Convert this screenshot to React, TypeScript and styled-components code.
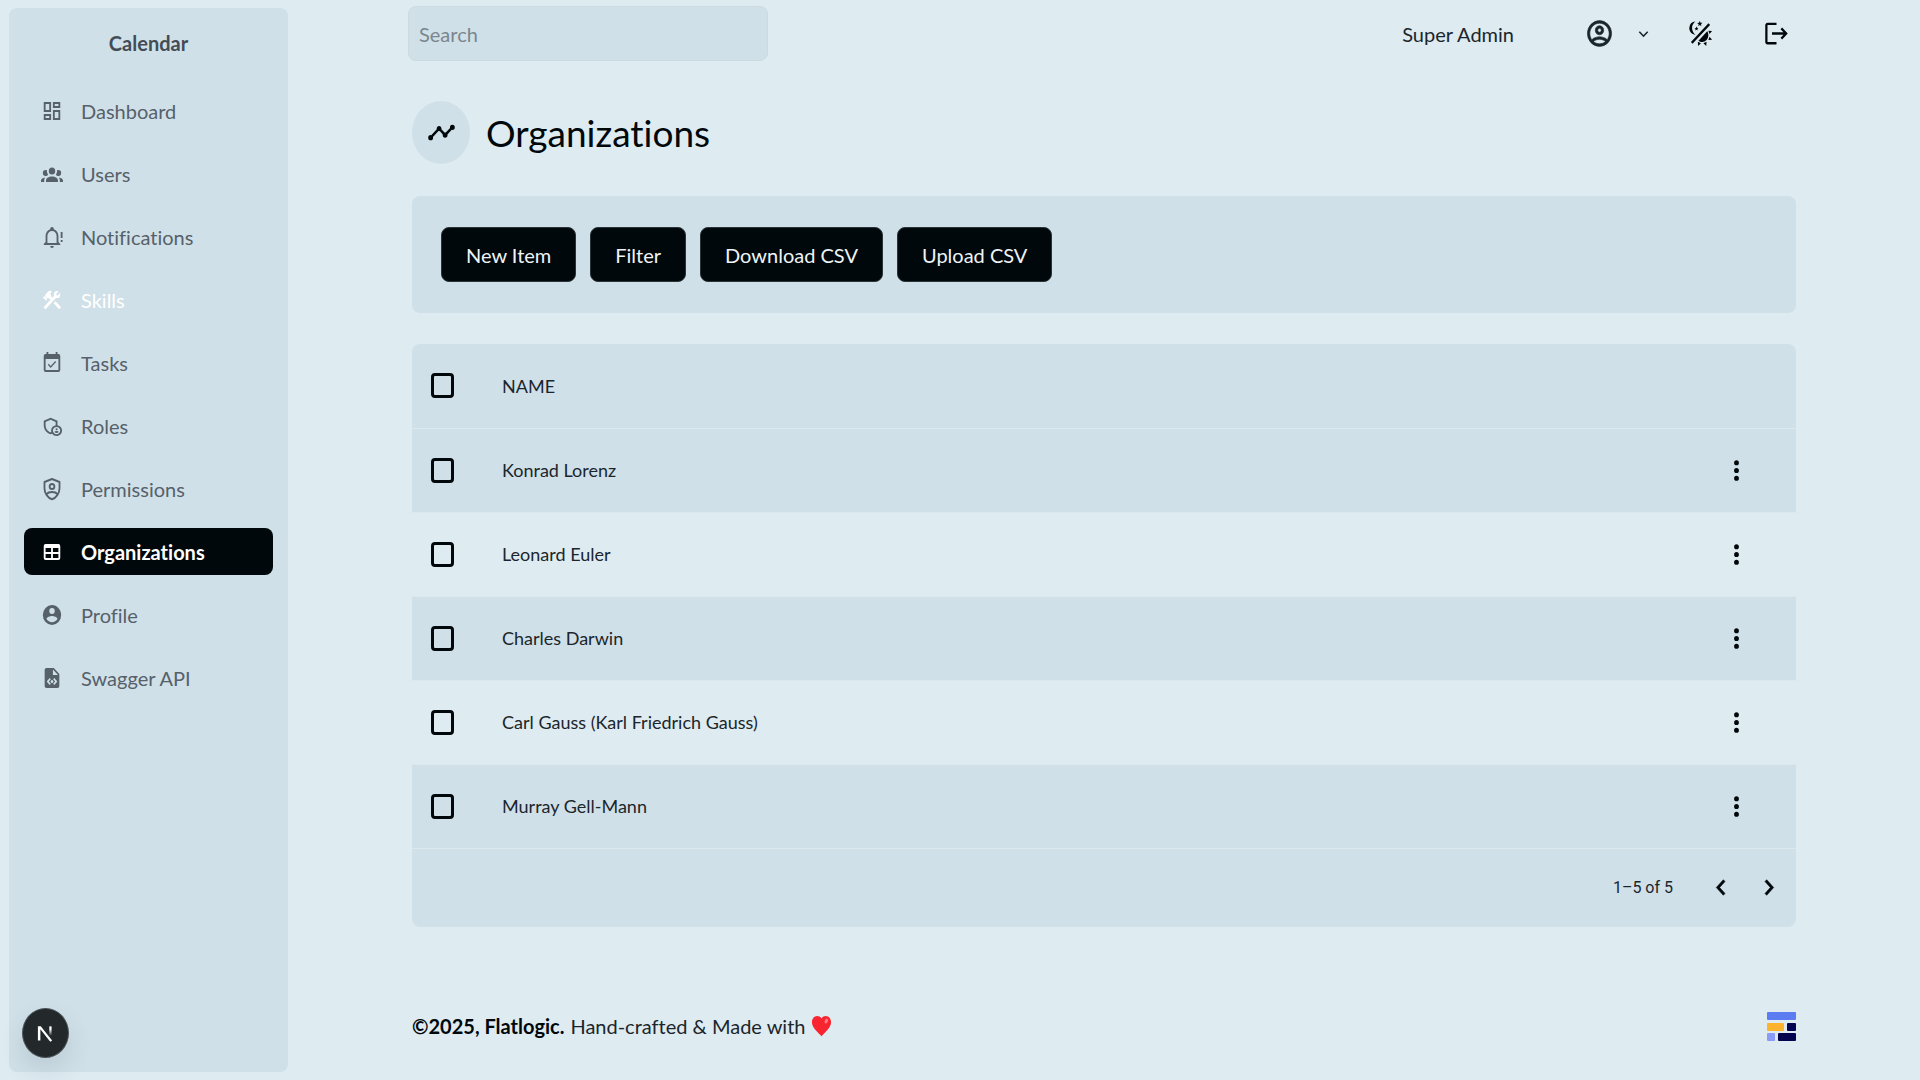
import React from "react";
import styled, { createGlobalStyle, css } from "styled-components";
import { MdOutlineAdminPanelSettings } from "react-icons/md";

const color = {
  page: "#deebf1",
  panel: "#d0e0e8",
  ink: "#01080b",
  text: "#1b262c",
  muted: "#56616a",
  border: "#dbe8ee",
};

const GlobalStyle = createGlobalStyle`
  *, *::before, *::after { box-sizing: border-box; }
  body {
    margin: 0;
    background: ${color.page};
    color: ${color.text};
    font: 400 20px/24px Lato, "Open Sans", sans-serif;
    font-variant-ligatures: none;
  }
  button, input { font: inherit; color: inherit; }
  h1, p { margin: 0; }
`;

const path = {
  dashboard:
    "M19,5V7H15V5H19M9,5V11H5V5H9M19,13V19H15V13H19M9,17V19H5V17H9M21,3H13V9H21V3M11,3H3V13H11V3M21,11H13V21H21V11M11,15H3V21H11V15Z",
  group:
    "M12,5.5A3.5,3.5 0 0,1 15.5,9A3.5,3.5 0 0,1 12,12.5A3.5,3.5 0 0,1 8.5,9A3.5,3.5 0 0,1 12,5.5M5,8C5.56,8 6.08,8.15 6.53,8.42C6.38,9.85 6.8,11.27 7.66,12.38C7.16,13.34 6.16,14 5,14A3,3 0 0,1 2,11A3,3 0 0,1 5,8M19,8A3,3 0 0,1 22,11A3,3 0 0,1 19,14C17.84,14 16.84,13.34 16.34,12.38C17.2,11.27 17.62,9.85 17.47,8.42C17.92,8.15 18.44,8 19,8M5.5,18.25C5.5,16.18 8.41,14.5 12,14.5C15.59,14.5 18.5,16.18 18.5,18.25V20H5.5V18.25M0,20V18.5C0,17.11 1.89,15.94 4.45,15.6C3.86,16.28 3.5,17.22 3.5,18.25V20H0M24,20H20.5V18.25C20.5,17.22 20.14,16.28 19.55,15.6C22.11,15.94 24,17.11 24,18.5V20Z",
  bell:
    "M10,21H14A2,2 0 0,1 12,23A2,2 0 0,1 10,21M21,19V20H3V19L5,17V11C5,7.9 7.03,5.17 10,4.29C10,4.19 10,4.1 10,4A2,2 0 0,1 12,2A2,2 0 0,1 14,4C14,4.1 14,4.19 14,4.29C16.97,5.17 19,7.9 19,11V17L21,19M17,11A5,5 0 0,0 12,6A5,5 0 0,0 7,11V18H17V11M21.5,7V13H23.5V7H21.5M21.5,15V17H23.5V15H21.5Z",
  tools:
    "M13.78 15.3L19.78 21.3L21.89 19.14L15.89 13.14L13.78 15.3M17.5 10.1C17.11 10.1 16.69 10.05 16.36 9.91L4.97 21.25L2.86 19.14L10.27 11.74L8.5 9.96L7.78 10.66L6.33 9.25V12.11L5.63 12.81L2.11 9.25L2.81 8.55H5.62L4.22 7.14L7.78 3.58C8.95 2.41 10.83 2.41 12 3.58L9.89 5.74L11.3 7.14L10.59 7.85L12.38 9.63L14.2 7.75C14.06 7.42 14 7 14 6.63C14 4.66 15.56 3.11 17.5 3.11C18.09 3.11 18.61 3.25 19.08 3.53L16.41 6.2L17.91 7.7L20.58 5.03C20.86 5.5 21 6 21 6.63C21 8.55 19.45 10.1 17.5 10.1Z",
  calendar:
    "M19,19H5V8H19M19,3H18V1H16V3H8V1H6V3H5C3.89,3 3,3.9 3,5V19A2,2 0 0,0 5,21H19A2,2 0 0,0 21,19V5A2,2 0 0,0 19,3M16.53,11.06L15.47,10L10.59,14.88L8.47,12.76L7.41,13.82L10.59,17L16.53,11.06Z",
  table:
    "M5,4H19A2,2 0 0,1 21,6V18A2,2 0 0,1 19,20H5A2,2 0 0,1 3,18V6A2,2 0 0,1 5,4M5,8V12H11V8H5M13,8V12H19V8H13M5,14V18H11V14H5M13,14V18H19V14H13Z",
  account:
    "M12,19.2C9.5,19.2 7.29,17.92 6,16C6.03,14 10,12.9 12,12.9C14,12.9 17.97,14 18,16C16.71,17.92 14.5,19.2 12,19.2M12,5A3,3 0 0,1 15,8A3,3 0 0,1 12,11A3,3 0 0,1 9,8A3,3 0 0,1 12,5M12,2A10,10 0 0,0 2,12A10,10 0 0,0 12,22A10,10 0 0,0 22,12C22,6.47 17.5,2 12,2Z",
  fileCode:
    "M13,9H18.5L13,3.5V9M6,2H14L20,8V20A2,2 0 0,1 18,22H6C4.89,22 4,21.1 4,20V4C4,2.89 4.89,2 6,2M9.5,12L6.2,15.5L9.5,19L10.7,17.8L8.6,15.5L10.7,13.2L9.5,12M14.5,12L13.3,13.2L15.4,15.5L13.3,17.8L14.5,19L17.8,15.5L14.5,12M12,14A1.5,1.5 0 0,0 12,17A1.5,1.5 0 0,0 12,14Z",
  chart:
    "M3,14L3.5,14.07L8.07,9.5C7.89,8.85 8.06,8.11 8.59,7.59C9.37,6.8 10.63,6.8 11.41,7.59C11.94,8.11 12.11,8.85 11.93,9.5L14.5,12.07L15,12C15.18,12 15.35,12 15.5,12.07L19.07,8.5C19,8.35 19,8.18 19,8A2,2 0 0,1 21,6A2,2 0 0,1 23,8A2,2 0 0,1 21,10C20.82,10 20.65,10 20.5,9.93L16.93,13.5C17,13.65 17,13.82 17,14A2,2 0 0,1 15,16A2,2 0 0,1 13,14L13.07,13.5L10.5,10.93C10.18,11 9.82,11 9.5,10.93L4.93,15.5L5,16A2,2 0 0,1 3,18A2,2 0 0,1 1,16A2,2 0 0,1 3,14Z",
  accountOutline:
    "M12,2A10,10 0 0,0 2,12A10,10 0 0,0 12,22A10,10 0 0,0 22,12A10,10 0 0,0 12,2M7.07,18.28C7.5,17.38 10.12,16.5 12,16.5C13.88,16.5 16.5,17.38 16.93,18.28C15.57,19.36 13.86,20 12,20C10.14,20 8.43,19.36 7.07,18.28M18.36,16.83C16.93,15.09 13.46,14.5 12,14.5C10.54,14.5 7.07,15.09 5.64,16.83C4.62,15.5 4,13.82 4,12C4,7.59 7.59,4 12,4C16.41,4 20,7.59 20,12C20,13.82 19.38,15.5 18.36,16.83M12,6C10.06,6 8.5,7.56 8.5,9.5C8.5,11.44 10.06,13 12,13C13.94,13 15.5,11.44 15.5,9.5C15.5,7.56 13.94,6 12,6M12,11A1.5,1.5 0 0,1 10.5,9.5A1.5,1.5 0 0,1 12,8A1.5,1.5 0 0,1 13.5,9.5A1.5,1.5 0 0,1 12,11Z",
  theme:
    "M7.5,2C5.71,3.15 4.5,5.18 4.5,7.5C4.5,9.82 5.71,11.85 7.53,13C4.46,13 2,10.54 2,7.5A5.5,5.5 0 0,1 7.5,2M19.07,3.5L20.5,4.93L4.93,20.5L3.5,19.07L19.07,3.5M12.89,5.93L11.41,5L9.97,6L10.39,4.3L9,3.24L10.75,3.12L11.33,1.47L12,3.1L13.73,3.13L12.38,4.26L12.89,5.93M9.59,9.54L8.43,8.81L7.31,9.59L7.65,8.27L6.56,7.44L7.92,7.35L8.37,6.06L8.88,7.33L10.24,7.36L9.19,8.23L9.59,9.54M19,13.5A5.5,5.5 0 0,1 13.5,19C12.28,19 11.15,18.6 10.24,17.93L17.93,10.24C18.6,11.15 19,12.28 19,13.5M14.6,20.08L17.37,18.93L17.13,22.28L14.6,20.08M18.93,17.38L20.08,14.61L22.28,17.15L18.93,17.38M20.08,12.42L18.94,9.64L22.28,9.88L20.08,12.42M9.63,18.93L12.4,20.08L9.87,22.27L9.63,18.93Z",
  logout:
    "M17 7L15.59 8.41L18.17 11H8V13H18.17L15.59 15.58L17 17L22 12M4 5H12V3H4C2.9 3 2 3.9 2 5V19C2 20.1 2.9 21 4 21H12V19H4V5Z",
  chevronDown: "M7.41,8.58L12,13.17L16.59,8.58L18,10L12,16L6,10L7.41,8.58Z",
  dots:
    "M12,16A2,2 0 0,1 14,18A2,2 0 0,1 12,20A2,2 0 0,1 10,18A2,2 0 0,1 12,16M12,10A2,2 0 0,1 14,12A2,2 0 0,1 12,14A2,2 0 0,1 10,12A2,2 0 0,1 12,10M12,4A2,2 0 0,1 14,6A2,2 0 0,1 12,8A2,2 0 0,1 10,6A2,2 0 0,1 12,4Z",
  left: "M15.41 7.41L14 6l-6 6 6 6 1.41-1.41L10.83 12z",
  right: "M10 6L8.59 7.41 13.17 12l-4.58 4.59L10 18l6-6z",
};

const Svg = styled.svg<{ $w: number; $h: number }>`
  display: block;
  flex: none;
  width: ${(p) => p.$w}px;
  height: ${(p) => p.$h}px;
  fill: currentColor;
`;

type IconProps = { d: string; w?: number; h?: number; bold?: boolean };

function Icon({ d, w = 22, h = 24, bold = false }: IconProps) {
  return (
    <Svg viewBox="0 0 24 24" preserveAspectRatio="none" $w={w} $h={h} aria-hidden="true">
      <path d={d} stroke="currentColor" strokeWidth={bold ? 0.5 : 0} />
    </Svg>
  );
}

function ShieldPerson() {
  return (
    <Svg viewBox="0 0 24 24" preserveAspectRatio="none" $w={22} $h={24} aria-hidden="true">
      <g fill="none" stroke="currentColor" strokeWidth="2" strokeLinejoin="round">
        <path d="M12 2L3.8 5v6.2C3.8 16.2 7.3 20.8 12 22.2C16.7 20.8 20.2 16.2 20.2 11.2V5Z" />
        <circle cx="12" cy="9.5" r="2.6" />
        <path d="M5.8 17.2C8.5 14.3 15.5 14.3 18.2 17.2" />
      </g>
    </Svg>
  );
}

const Shell = styled.div`
  display: flex;
  min-height: 100vh;
`;

const Sidebar = styled.aside`
  position: sticky;
  top: 8px;
  flex: none;
  width: 279px;
  height: calc(100vh - 16px);
  margin: 8px 0 8px 9px;
  padding: 0 15px;
  border-radius: 8px;
  background: ${color.panel};
  color: ${color.muted};
`;

const Brand = styled.p`
  padding: 23px 0 32px;
  text-align: center;
  font-weight: 700;
  color: #434d56;
`;

const NavList = styled.ul`
  display: grid;
  gap: 16px;
  margin: 0;
  padding: 0;
  list-style: none;
`;

type NavState = "idle" | "hover" | "active";

const NavLink = styled.a<{ $state: NavState }>`
  display: flex;
  align-items: center;
  gap: 18px;
  height: 47px;
  padding: 0 17px;
  border-radius: 8px;
  color: inherit;
  text-decoration: none;
  ${(p) =>
    p.$state === "hover" &&
    css`
      color: #fff;
    `}
  ${(p) =>
    p.$state === "active" &&
    css`
      background: ${color.ink};
      color: #fff;
      font-weight: 700;
    `}
`;

const DevBadge = styled.button`
  position: absolute;
  left: 13px;
  bottom: 14px;
  display: grid;
  place-items: center;
  width: 47px;
  height: 50px;
  padding: 0;
  border: 1px solid #4d555a;
  border-radius: 50%;
  background: #23282b;
  color: #fff;
  box-shadow: 0 12px 24px rgba(60, 80, 90, 0.14);
`;

const Main = styled.div`
  flex: 1;
  min-width: 0;
`;

const Container = styled.div`
  max-width: 1384px;
  margin: 0 auto;
`;

const TopBar = styled.header`
  display: flex;
  align-items: center;
  max-width: 1392px;
  margin: 0 auto;
  padding: 6px 4px 0 0;
`;

const Search = styled.input`
  width: 360px;
  height: 55px;
  padding: 0 10px;
  border: 1px solid #ccdae0;
  border-radius: 8px;
  background: ${color.panel};
  outline: none;
  &::placeholder {
    color: #7b868d;
    opacity: 1;
  }
`;

const TopActions = styled.div`
  display: flex;
  align-items: center;
  gap: 27px;
  margin-left: auto;
`;

const ButtonPair = styled.div`
  display: flex;
  gap: 36px;
`;

const UserButton = styled.button`
  display: flex;
  align-items: center;
  padding: 0;
  border: 0;
  background: none;
`;

const Avatar = styled.span`
  margin: 0 20px 0 71px;
`;

const IconButton = styled.button`
  display: grid;
  place-items: center;
  width: 40px;
  height: 40px;
  padding: 0;
  border: 0;
  background: none;
  color: ${color.ink};
`;

const TitleRow = styled.div`
  display: flex;
  align-items: center;
  gap: 16px;
  padding: 40px 0 32px;
`;

const TitleIcon = styled.span`
  display: grid;
  place-items: center;
  width: 58px;
  height: 63px;
  border-radius: 50%;
  background: ${color.panel};
  color: ${color.ink};
`;

const Title = styled.h1`
  font-size: 37px;
  line-height: 48px;
  font-weight: 400;
  color: ${color.ink};
`;

const Card = styled.section`
  border-radius: 8px;
  background: ${color.panel};
  overflow: hidden;
`;

const Toolbar = styled(Card)`
  display: flex;
  flex-wrap: wrap;
  gap: 14px;
  margin-bottom: 31px;
  padding: 31px 29px;
`;

const Button = styled.button`
  height: 55px;
  padding: 0 24px;
  border: 1px solid #2a3338;
  border-radius: 8px;
  background: ${color.ink};
  color: #eef4f7;
`;

const Table = styled.table`
  width: 100%;
  border-collapse: collapse;
  font-size: 18px;
`;

const Row = styled.tr<{ $light?: boolean }>`
  height: 84px;
  border-bottom: 1px solid ${color.border};
  background: ${(p) => (p.$light ? color.page : "transparent")};
`;

const CheckCell = styled.td`
  width: 72px;
  padding: 0 0 0 19px;
`;

const HeadCell = styled.th`
  padding: 0 18px;
  text-align: left;
  font-weight: 400;
`;

const Cell = styled.td`
  padding: 0 18px;
`;

const ActionCell = styled.td`
  width: 80px;
  padding: 0;
`;

const Checkbox = styled.input`
  appearance: none;
  display: block;
  width: 23px;
  height: 25px;
  margin: 0;
  border: 3px solid ${color.ink};
  border-radius: 4px;
  &:checked {
    background: ${color.ink};
  }
`;

const Pager = styled.div`
  display: flex;
  align-items: center;
  justify-content: flex-end;
  gap: 8px;
  height: 78px;
  padding-right: 7px;
  font: 400 16px/24px Roboto, "Liberation Sans", sans-serif;
`;

const PagerRange = styled.span`
  margin-right: 20px;
`;

const Footer = styled.footer`
  display: flex;
  align-items: center;
  justify-content: space-between;
  padding: 85px 0 35px;
`;

const FooterText = styled.p`
  display: flex;
  align-items: center;
  gap: 6px;
  strong {
    color: ${color.ink};
  }
`;

const nav: { label: string; icon: React.ReactNode; state?: NavState }[] = [
  { label: "Dashboard", icon: <Icon d={path.dashboard} /> },
  { label: "Users", icon: <Icon d={path.group} /> },
  { label: "Notifications", icon: <Icon d={path.bell} /> },
  { label: "Skills", icon: <Icon d={path.tools} />, state: "hover" },
  { label: "Tasks", icon: <Icon d={path.calendar} /> },
  { label: "Roles", icon: <MdOutlineAdminPanelSettings size={22} /> },
  { label: "Permissions", icon: <ShieldPerson /> },
  { label: "Organizations", icon: <Icon d={path.table} />, state: "active" },
  { label: "Profile", icon: <Icon d={path.account} /> },
  { label: "Swagger API", icon: <Icon d={path.fileCode} /> },
];

const organizations = [
  "Konrad Lorenz",
  "Leonard Euler",
  "Charles Darwin",
  "Carl Gauss (Karl Friedrich Gauss)",
  "Murray Gell-Mann",
];

export default function App() {
  return (
    <>
      <GlobalStyle />
      <Shell>
        <Sidebar>
          <Brand>Calendar</Brand>
          <nav>
            <NavList>
              {nav.map((item) => (
                <li key={item.label}>
                  <NavLink href="#" $state={item.state ?? "idle"}>
                    {item.icon}
                    {item.label}
                  </NavLink>
                </li>
              ))}
            </NavList>
          </nav>
          <DevBadge aria-label="Open developer tools">
            <Svg viewBox="0 0 20 20" $w={19} $h={20} aria-hidden="true">
              <defs>
                <linearGradient id="fade" x1="0" y1="0" x2="0" y2="1">
                  <stop offset="0.3" stopColor="#fff" />
                  <stop offset="1" stopColor="#fff" stopOpacity="0" />
                </linearGradient>
              </defs>
              <path d="M2 18V3h3L17 18l-2 1.200L4.600 6v12z" />
              <path d="M14 3h2.400v10H14z" fill="url(#fade)" />
            </Svg>
          </DevBadge>
        </Sidebar>
        <Main>
          <TopBar>
            <Search type="search" placeholder="Search" aria-label="Search" />
            <TopActions>
              <UserButton>
                Super Admin
                <Avatar>
                  <Icon d={path.accountOutline} w={29} h={31} bold />
                </Avatar>
                <Icon d={path.chevronDown} w={19} h={20} />
              </UserButton>
              <ButtonPair>
                <IconButton aria-label="Toggle theme">
                  <Icon d={path.theme} w={27} h={29} />
                </IconButton>
                <IconButton aria-label="Log out">
                  <Icon d={path.logout} w={27} h={29} />
                </IconButton>
              </ButtonPair>
            </TopActions>
          </TopBar>
          <Container>
            <TitleRow>
              <TitleIcon>
                <Icon d={path.chart} w={29} h={31} />
              </TitleIcon>
              <Title>Organizations</Title>
            </TitleRow>
            <Toolbar>
              <Button>New Item</Button>
              <Button>Filter</Button>
              <Button>Download CSV</Button>
              <Button>Upload CSV</Button>
            </Toolbar>
            <Card>
              <Table>
                <thead>
                  <Row>
                    <CheckCell>
                      <Checkbox type="checkbox" aria-label="Select all rows" />
                    </CheckCell>
                    <HeadCell>NAME</HeadCell>
                    <ActionCell />
                  </Row>
                </thead>
                <tbody>
                  {organizations.map((name, i) => (
                    <Row key={name} $light={i % 2 === 1}>
                      <CheckCell>
                        <Checkbox type="checkbox" aria-label={`Select ${name}`} />
                      </CheckCell>
                      <Cell>{name}</Cell>
                      <ActionCell>
                        <IconButton aria-label={`Actions for ${name}`}>
                          <Icon d={path.dots} w={29} h={31} />
                        </IconButton>
                      </ActionCell>
                    </Row>
                  ))}
                </tbody>
              </Table>
              <Pager>
                <PagerRange>1–5 of 5</PagerRange>
                <IconButton aria-label="Previous page">
                  <Icon d={path.left} w={28} h={31} bold />
                </IconButton>
                <IconButton aria-label="Next page">
                  <Icon d={path.right} w={28} h={31} bold />
                </IconButton>
              </Pager>
            </Card>
            <Footer>
              <FooterText>
                <strong>©2025, Flatlogic.</strong>
                <span>Hand-crafted &amp; Made with</span>
                <Svg viewBox="1 2 22 20" preserveAspectRatio="none" $w={21} $h={22} aria-label="love">
                  <path
                    fill="#f8242f"
                    d="M12,21.35L10.55,20.03C5.4,15.36 2,12.27 2,8.5C2,5.41 4.42,3 7.5,3C9.24,3 10.91,3.81 12,5.08C13.09,3.81 14.76,3 16.5,3C19.58,3 22,5.41 22,8.5C22,12.27 18.6,15.36 13.45,20.03L12,21.35Z"
                  />
                  <ellipse cx="17" cy="7.5" rx="1.6" ry="2.4" fill="#ff7a80" transform="rotate(30 17 7.5)" />
                </Svg>
              </FooterText>
              <Svg viewBox="0 0 29 29" $w={29} $h={29} aria-label="Flatlogic">
                <rect width="29" height="8" rx="1" fill="#5c7cf2" />
                <rect y="11" width="17" height="8" rx="1" fill="#fdb32e" />
                <rect x="20" y="11" width="9" height="8" rx="1" fill="#030350" />
                <rect y="21" width="8" height="8" rx="1" fill="#8b9bf8" />
                <rect x="11" y="21" width="18" height="8" rx="1" fill="#030350" />
              </Svg>
            </Footer>
          </Container>
        </Main>
      </Shell>
    </>
  );
}
